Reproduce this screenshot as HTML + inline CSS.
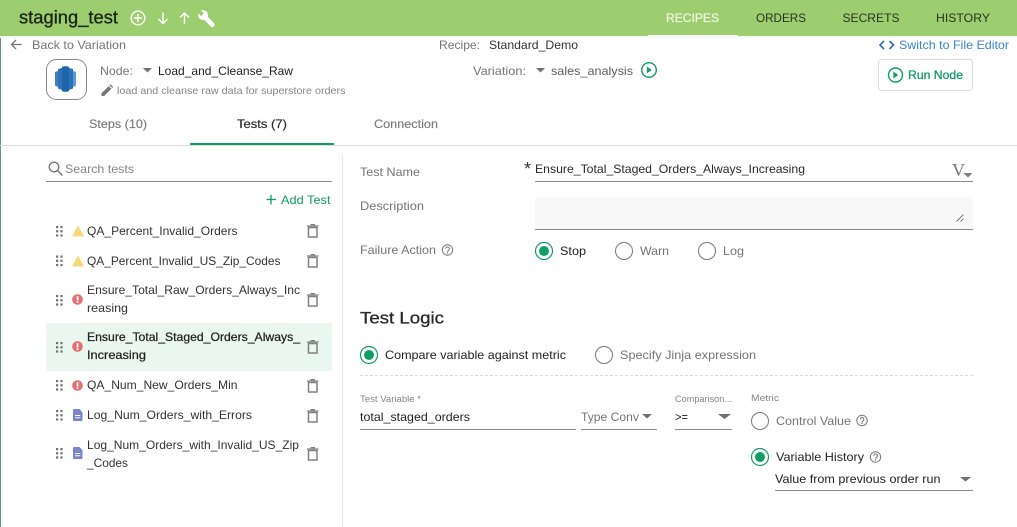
<!DOCTYPE html>
<html><head><meta charset="utf-8"><style>
html,body{margin:0;padding:0;background:#fff;width:1017px;height:527px;overflow:hidden}
svg{display:block;font-family:"Liberation Sans",sans-serif}
text{font-size:12px;fill:#333}
.g{fill:#757575}.d{fill:#222}.gr{fill:#0f9d63}.m{stroke:#222;stroke-width:.25}
.l{stroke:#8a8a8a;stroke-width:1;fill:none}
</style></head><body>
<svg width="1017" height="527" viewBox="0 0 1017 527" xmlns="http://www.w3.org/2000/svg">
<defs>
<g id="dots" fill="#707070"><rect x="0" y="0" width="2.2" height="2.2"/><rect x="4.4" y="0" width="2.2" height="2.2"/><rect x="0" y="4.2" width="2.2" height="2.2"/><rect x="4.4" y="4.2" width="2.2" height="2.2"/><rect x="0" y="8.4" width="2.2" height="2.2"/><rect x="4.4" y="8.4" width="2.2" height="2.2"/></g>
<g id="trash"><path d="M1.5 3.5h8.5v9.5h-8.5z" fill="none" stroke="#808080" stroke-width="1.5"/><path d="M0 2h11.5M3.5 .6h4.500" stroke="#808080" stroke-width="1.3"/></g>
<path id="warn" d="M6-.8L12 10.500H0z" fill="#f7d97c"/>
<g id="err"><circle cx="5.5" cy="5.5" r="5.3" fill="#e56e70"/><rect x="4.7" y="2.2" width="1.7" height="4.4" fill="#fff"/><rect x="4.7" y="7.4" width="1.7" height="1.6" fill="#fff"/></g>
<g id="log"><path d="M1 0h5.500L9.500 3.500V11a1 1 0 0 1-1 1H1a1 1 0 0 1-1-1V1a1 1 0 0 1 1-1z" fill="#7c84cc"/><path d="M2.200 6.500h5M2.200 8.800h5" stroke="#fff" stroke-width="1"/></g>
<g id="on"><circle r="8.500" fill="none" stroke="#0f9d63" stroke-width="1.200"/><circle r="5" fill="#0f9d63"/></g>
<circle id="off" r="8.500" fill="none" stroke="#777" stroke-width="1"/>
<g id="q"><circle r="5.200" fill="none" stroke="#777" stroke-width="1"/><path d="M-1.700-1.200a1.800 1.800 0 1 1 2.800 1.400c-.7.500-1.100.8-1.100 1.500" fill="none" stroke="#777" stroke-width="1"/><circle cy="3" r=".7" fill="#777"/></g>
</defs>

<rect width="1017" height="527" fill="#fff"/>
<rect x="0" y="36" width="1" height="491" fill="#6f8fa0"/>
<rect width="1017" height="36" fill="#9ccd6f"/>
<rect y="36" width="1017" height="2" fill="#f6f6f6"/>
<text x="19" y="23.500" textLength="99" lengthAdjust="spacingAndGlyphs" style="font-size:18px;fill:#1b2416;stroke:#1b2416;stroke-width:.3">staging_test</text>

<g fill="none" stroke="#fff" stroke-width="1.400">
<circle cx="138" cy="18" r="6.800"/><path d="M134 18h8M138 14v8"/>
<path d="M163 12.500v11M158.500 19l4.500 4.500 4.500-4.500"/>
<path d="M184.500 24v-11M180 17.500l4.500-4.500 4.500 4.500"/>
</g>
<circle cx="203" cy="15" r="5" fill="#fff"/>
<path d="M204 16l8.200 8.700" stroke="#fff" stroke-width="4.600" stroke-linecap="round"/>
<path d="M199 8.500l4.700 5-2.600 2.600-4.800-4.600-1-3z" fill="#9ccd6f"/>

<text x="666" y="22" textLength="53" lengthAdjust="spacingAndGlyphs" style="fill:#eef7e4;stroke:#eef7e4;stroke-width:.25">RECIPES</text>
<text x="756" y="22" textLength="50" lengthAdjust="spacingAndGlyphs" style="fill:#27331f">ORDERS</text>
<text x="842.500" y="22" textLength="57" lengthAdjust="spacingAndGlyphs" style="fill:#27331f">SECRETS</text>
<text x="936" y="22" textLength="54" lengthAdjust="spacingAndGlyphs" style="fill:#27331f">HISTORY</text>
<rect x="648" y="35" width="90" height="1.500" fill="#fff"/>

<path d="M21.500 44.500H12M16 40l-4.500 4.500 4.500 4.500" fill="none" stroke="#757575" stroke-width="1.300"/>
<text class="g" x="32" y="49" textLength="94" lengthAdjust="spacingAndGlyphs">Back to Variation</text>
<text class="g" x="439" y="49" textLength="41" lengthAdjust="spacingAndGlyphs">Recipe:</text>
<text x="489" y="49" textLength="89" lengthAdjust="spacingAndGlyphs">Standard_Demo</text>
<path d="M884 41l-4 4 4 4M889.500 41l4 4-4 4" fill="none" stroke="#2f6fb5" stroke-width="1.700"/>
<text x="899" y="49" textLength="110" lengthAdjust="spacingAndGlyphs" style="fill:#3f82c6">Switch to File Editor</text>

<rect x="46.500" y="59.500" width="40" height="40" rx="10" fill="#fff" stroke="#8a8a8a"/>
<path d="M55 72l3-1v16l-3-1.500z" fill="#3f7fbf"/><path d="M58 69l4-1v22l-4-1.500z" fill="#2e73b8"/>
<path d="M62 67c1-1 6-1 7 0v24c-1 1-6 1-7 0z" fill="#1f65ac"/>
<path d="M69 68l4 1v19.500l-4 1.500z" fill="#2e73b8"/><path d="M73 71l3 1v13.500l-3 1.500z" fill="#5a98d2"/>

<text class="g" x="100" y="75" textLength="33" lengthAdjust="spacingAndGlyphs">Node:</text>
<path d="M143 68h9l-4.500 4.500z" fill="#707070"/>
<text class="d" x="158" y="75" textLength="135" lengthAdjust="spacingAndGlyphs">Load_and_Cleanse_Raw</text>
<path d="M101.500 96v-2.700l7.200-7.200 2.700 2.700-7.200 7.200zM109.500 85.300l1-1 2.700 2.700-1 1z" fill="#777"/>
<text class="g" x="117" y="94" textLength="228.500" lengthAdjust="spacingAndGlyphs" style="font-size:10.500px;fill:#858585">load and cleanse raw data for superstore orders</text>
<text class="g" x="473" y="75" textLength="53" lengthAdjust="spacingAndGlyphs">Variation:</text>
<path d="M536 68h9l-4.500 4.500z" fill="#707070"/>
<text class="g" x="551" y="75" textLength="82" lengthAdjust="spacingAndGlyphs" style="fill:#5f5f5f">sales_analysis</text>
<circle cx="649" cy="70" r="7.300" fill="none" stroke="#0f9d63" stroke-width="1.400"/><path d="M646.800 66.500v7l5-3.500z" fill="#0f9d63"/>

<rect x="878.500" y="59.500" width="94" height="31" rx="3" fill="#fff" stroke="#dcdcdc"/>
<circle cx="895.500" cy="75" r="7" fill="none" stroke="#0f9d63" stroke-width="1.400"/><path d="M893.300 71.500v7l5-3.500z" fill="#0f9d63"/>
<text x="908" y="79" textLength="55" lengthAdjust="spacingAndGlyphs" style="fill:#0f9d63;stroke:#0f9d63;stroke-width:.3">Run Node</text>

<text x="89" y="128" textLength="58" lengthAdjust="spacingAndGlyphs" style="fill:#7a7a7a;stroke:#7a7a7a;stroke-width:.15">Steps (10)</text>
<text x="237" y="128" textLength="50" lengthAdjust="spacingAndGlyphs" style="fill:#2a2a2a;stroke:#2a2a2a;stroke-width:.2">Tests (7)</text>
<text x="374" y="128" textLength="64" lengthAdjust="spacingAndGlyphs" style="fill:#7a7a7a;stroke:#7a7a7a;stroke-width:.15">Connection</text>
<rect y="145" width="1017" height="1" fill="#dedede"/>
<rect x="190" y="143" width="144" height="2" fill="#0f9d63"/>
<rect x="342" y="155" width="1" height="372" fill="#e8e8e8"/>

<circle cx="54" cy="167" r="4.800" fill="none" stroke="#777" stroke-width="1.300"/><path d="M57.500 170.500l5 5" stroke="#777" stroke-width="1.500"/>
<text class="g" x="65" y="173" textLength="69" lengthAdjust="spacingAndGlyphs" style="fill:#858585">Search tests</text>
<path d="M46 181.500h286" stroke="#8a8a8a"/>
<path d="M271 195v9.500M266.500 199.500h9.500" stroke="#0f9d63" stroke-width="1.300"/>
<text class="gr" x="281" y="204" textLength="49.500" lengthAdjust="spacingAndGlyphs">Add Test</text>

<rect x="46" y="323" width="286" height="48" fill="#e9f7f0"/>

<use href="#dots" x="56" y="226"/><use href="#warn" x="72" y="226"/><use href="#trash" x="307" y="224"/>
<text x="87" y="235" textLength="150.500" lengthAdjust="spacingAndGlyphs">QA_Percent_Invalid_Orders</text>
<use href="#dots" x="56" y="255.500"/><use href="#warn" x="72" y="256"/><use href="#trash" x="307" y="254"/>
<text x="87" y="265" textLength="193.500" lengthAdjust="spacingAndGlyphs">QA_Percent_Invalid_US_Zip_Codes</text>
<use href="#dots" x="56" y="295"/><use href="#err" x="72" y="294"/><use href="#trash" x="307" y="293"/>
<text x="87" y="294" textLength="213" lengthAdjust="spacingAndGlyphs">Ensure_Total_Raw_Orders_Always_Inc</text>
<text x="87" y="312" textLength="41" lengthAdjust="spacingAndGlyphs">reasing</text>
<use href="#dots" x="56" y="342"/><use href="#err" x="72" y="341"/><use href="#trash" x="307" y="340"/>
<text x="87" y="341" textLength="213" lengthAdjust="spacingAndGlyphs" class="m" style="fill:#222">Ensure_Total_Staged_Orders_Always_</text>
<text x="87" y="359" textLength="59" lengthAdjust="spacingAndGlyphs" class="m" style="fill:#222">Increasing</text>
<use href="#dots" x="56" y="380"/><use href="#err" x="72" y="380"/><use href="#trash" x="307" y="379"/>
<text x="87" y="389" textLength="150.500" lengthAdjust="spacingAndGlyphs">QA_Num_New_Orders_Min</text>
<use href="#dots" x="56" y="410"/><use href="#log" x="73" y="409"/><use href="#trash" x="307" y="409"/>
<text x="87" y="419" textLength="165" lengthAdjust="spacingAndGlyphs">Log_Num_Orders_with_Errors</text>
<use href="#dots" x="56" y="448"/><use href="#log" x="73" y="447"/><use href="#trash" x="307" y="447"/>
<text x="87" y="449" textLength="212" lengthAdjust="spacingAndGlyphs">Log_Num_Orders_with_Invalid_US_Zip</text>
<text x="87" y="467" textLength="41" lengthAdjust="spacingAndGlyphs">_Codes</text>

<text class="g" x="360" y="176" textLength="60" lengthAdjust="spacingAndGlyphs">Test Name</text>
<text class="g" x="360" y="210" textLength="64" lengthAdjust="spacingAndGlyphs">Description</text>
<text class="g" x="360" y="254" textLength="76" lengthAdjust="spacingAndGlyphs">Failure Action</text>
<use href="#q" x="447.500" y="250"/>
<text x="524" y="175" style="font-size:18px;fill:#333">*</text>
<text x="535" y="173" textLength="270" lengthAdjust="spacingAndGlyphs" style="fill:#2a2a2a">Ensure_Total_Staged_Orders_Always_Increasing</text>
<path d="M535 181.500h438" stroke="#8a8a8a"/>
<text x="952" y="176" style="font-family:'Liberation Serif',serif;font-size:18px;fill:#777">V</text>
<path d="M963.500 173h9l-4.500 4.500z" fill="#808080"/>
<rect x="535" y="197" width="438" height="32" fill="#f8f8f8"/>
<path d="M535 229.500h438" stroke="#8a8a8a"/>
<path d="M956.500 221.500l7-7M960.500 221.500l3-3" stroke="#555" stroke-width=".8"/>

<use href="#on" x="544" y="251"/><text class="d" x="560" y="255" textLength="26" lengthAdjust="spacingAndGlyphs">Stop</text>
<use href="#off" x="624" y="251"/><text class="g" x="640" y="255" textLength="29" lengthAdjust="spacingAndGlyphs">Warn</text>
<use href="#off" x="707" y="251"/><text class="g" x="723" y="255" textLength="21" lengthAdjust="spacingAndGlyphs">Log</text>

<text x="360" y="323.500" textLength="84" lengthAdjust="spacingAndGlyphs" style="font-size:17px;fill:#2a2a2a;stroke:#2a2a2a;stroke-width:.3">Test Logic</text>
<use href="#on" x="369" y="355"/><text class="d" x="385" y="359" textLength="181" lengthAdjust="spacingAndGlyphs">Compare variable against metric</text>
<use href="#off" x="604" y="355"/><text class="g" x="620" y="359" textLength="136" lengthAdjust="spacingAndGlyphs">Specify Jinja expression</text>
<path d="M360 375.500h613" stroke="#dcdcdc" stroke-dasharray="3 2"/>

<text class="g" x="360" y="402" textLength="61" lengthAdjust="spacingAndGlyphs" style="font-size:9px;fill:#858585">Test Variable *</text>
<text class="d" x="360" y="421" textLength="110" lengthAdjust="spacingAndGlyphs">total_staged_orders</text>
<path d="M360 429.500h216" stroke="#8a8a8a"/>
<text class="g" x="581" y="421" textLength="58" lengthAdjust="spacingAndGlyphs">Type Conv</text>
<path d="M642 414h10l-5 4.500z" fill="#707070"/>
<path d="M581 429.500h76" stroke="#8a8a8a"/>
<text class="g" x="675" y="402" textLength="57" lengthAdjust="spacingAndGlyphs" style="font-size:9px;fill:#858585">Comparison...</text>
<text class="d" x="675" y="421" textLength="13" lengthAdjust="spacingAndGlyphs">&gt;=</text>
<path d="M718 414h13l-6.500 5z" fill="#707070"/>
<path d="M675 429.500h57" stroke="#8a8a8a"/>

<text class="g" x="751" y="401" textLength="28" lengthAdjust="spacingAndGlyphs" style="font-size:9.500px;fill:#858585">Metric</text>
<use href="#off" x="760" y="421"/><text class="g" x="776" y="425" textLength="75" lengthAdjust="spacingAndGlyphs">Control Value</text>
<use href="#q" x="862" y="420.500"/>
<use href="#on" x="760" y="457"/><text class="d" x="776" y="461" textLength="88" lengthAdjust="spacingAndGlyphs">Variable History</text>
<use href="#q" x="875.500" y="457"/>
<text class="d" x="775" y="483" textLength="165.500" lengthAdjust="spacingAndGlyphs">Value from previous order run</text>
<path d="M960 477h11l-5.500 4.500z" fill="#707070"/>
<path d="M775 490.500h198" stroke="#8a8a8a"/>
</svg>
</body></html>
